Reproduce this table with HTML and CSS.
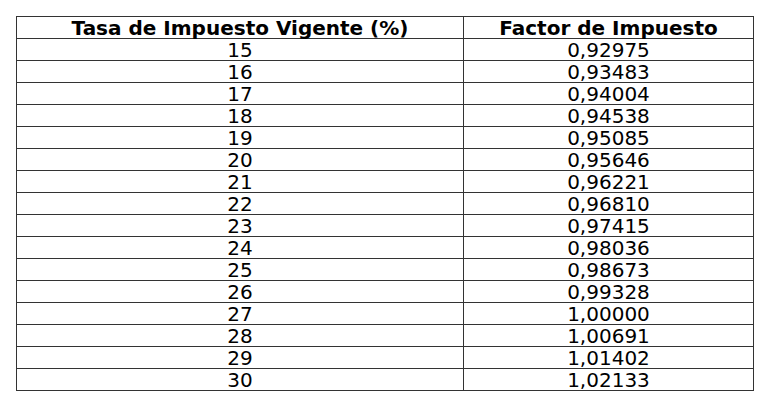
FILE: index.html
```html
<!DOCTYPE html>
<html lang="es">
<head>
<meta charset="utf-8">
<title>Tasa de Impuesto</title>
<link rel="stylesheet" href="styles.css">
</head>
<body>
<table class="tax-table">
  <thead>
    <tr><th class="col-rate">Tasa de Impuesto Vigente (%)</th><th class="col-factor">Factor de Impuesto</th></tr>
  </thead>
  <tbody>
    <tr><td>15</td><td>0,92975</td></tr>
    <tr><td>16</td><td>0,93483</td></tr>
    <tr><td>17</td><td>0,94004</td></tr>
    <tr><td>18</td><td>0,94538</td></tr>
    <tr><td>19</td><td>0,95085</td></tr>
    <tr><td>20</td><td>0,95646</td></tr>
    <tr><td>21</td><td>0,96221</td></tr>
    <tr><td>22</td><td>0,96810</td></tr>
    <tr><td>23</td><td>0,97415</td></tr>
    <tr><td>24</td><td>0,98036</td></tr>
    <tr><td>25</td><td>0,98673</td></tr>
    <tr><td>26</td><td>0,99328</td></tr>
    <tr><td>27</td><td>1,00000</td></tr>
    <tr><td>28</td><td>1,00691</td></tr>
    <tr><td>29</td><td>1,01402</td></tr>
    <tr><td>30</td><td>1,02133</td></tr>
  </tbody>
</table>
</body>
</html>
```
FILE: styles.css
```css
html, body {
  margin: 0;
  padding: 0;
  background: #ffffff;
}
body {
  padding: 16px 0 0 16px;
  font-family: "DejaVu Sans", sans-serif;
  color: #000000;
}
.tax-table {
  border-collapse: collapse;
  width: 735px;
  table-layout: fixed;
  font-size: 20px;
}
.col-rate { width: 446px; }
.col-factor { width: 289px; }
.tax-table th,
.tax-table td {
  border: 1px solid #333333;
  padding: 2px 0 0;
  line-height: 19px;
  text-align: center;
}
.tax-table th {
  font-weight: bold;
}
```
